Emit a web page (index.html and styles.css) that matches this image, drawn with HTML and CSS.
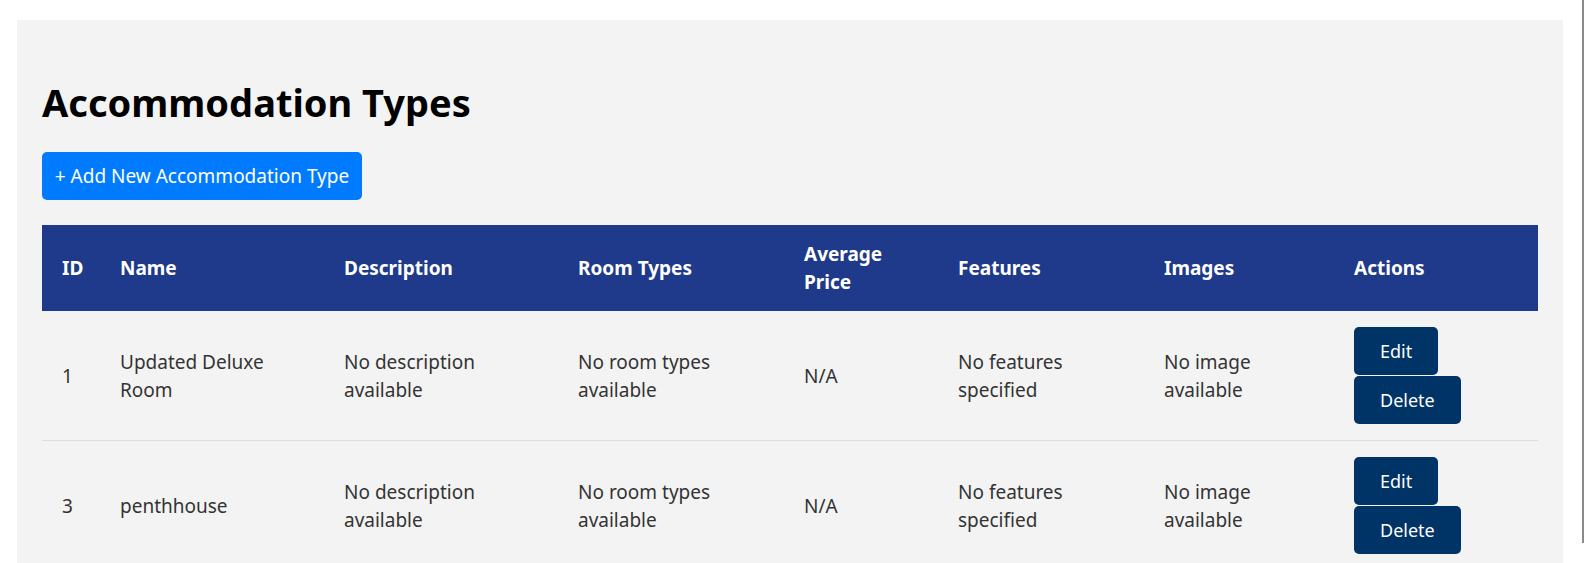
FILE: index.html
```html
<!DOCTYPE html>
<html lang="en">
<head>
<meta charset="utf-8">
<title>Accommodation Types</title>
<link rel="stylesheet" href="styles.css">
</head>
<body>
<div class="page">
  <main class="panel">
    <h1 class="title">Accommodation Types</h1>
    <button class="btn-add">+ Add New Accommodation Type</button>
    <table class="grid">
      <colgroup>
        <col class="c-id"><col class="c-name"><col class="c-desc"><col class="c-room"><col class="c-price"><col class="c-feat"><col class="c-img"><col class="c-act">
      </colgroup>
      <thead>
        <tr>
          <th>ID</th><th>Name</th><th>Description</th><th>Room Types</th><th>Average Price</th><th>Features</th><th>Images</th><th>Actions</th>
        </tr>
      </thead>
      <tbody>
        <tr>
          <td>1</td>
          <td>Updated Deluxe Room</td>
          <td>No description available</td>
          <td>No room types available</td>
          <td>N/A</td>
          <td>No features specified</td>
          <td>No image available</td>
          <td class="actions"><button class="btn-act">Edit</button><button class="btn-act">Delete</button></td>
        </tr>
        <tr>
          <td>3</td>
          <td>penthhouse</td>
          <td>No description available</td>
          <td>No room types available</td>
          <td>N/A</td>
          <td>No features specified</td>
          <td>No image available</td>
          <td class="actions"><button class="btn-act">Edit</button><button class="btn-act">Delete</button></td>
        </tr>
      </tbody>
    </table>
  </main>
  <div class="edge"></div>
</div>
</body>
</html>
```
FILE: styles.css
```css
html, body {
  margin: 0;
  padding: 0;
  background: #ffffff;
  height: 100%;
  overflow: hidden;
}
.page {
  display: flex;
  align-items: flex-start;
  height: 100%;
  padding: 20px 3px 0 17px;
  box-sizing: border-box;
}
.panel {
  width: 1546px;
  flex: none;
  background: #f3f3f3;
  padding: 57px 25px 40px 25px;
  box-sizing: border-box;
  min-height: 800px;
}
.edge {
  width: 2px;
  height: 100%;
  margin-top: -20px;
  margin-left: 19px;
  background: #8a8a8a;
  flex: none;
}
.title {
  font-family: "Noto Sans", sans-serif;
  font-weight: 700;
  font-size: 38px;
  line-height: 50px;
  color: #000;
  margin: 0 0 25px 0;
}
.btn-add {
  display: block;
  height: 48px;
  width: 320px;
  padding: 0;
  background: #007bff;
  color: #fff;
  border: none;
  border-radius: 5px;
  font-family: "Noto Sans", sans-serif;
  font-size: 19px;
  margin-bottom: 25px;
}
.grid {
  width: 1496px;
  border-collapse: collapse;
  table-layout: fixed;
  font-family: "Noto Sans", sans-serif;
  font-size: 19px;
  line-height: 28px;
  color: #333;
}
.c-id { width: 58px; }
.c-name { width: 224px; }
.c-desc { width: 234px; }
.c-room { width: 226px; }
.c-price { width: 154px; }
.c-feat { width: 206px; }
.c-img { width: 190px; }
.c-act { width: 204px; }
.grid th {
  background: #1f3a8a;
  color: #fff;
  font-weight: 700;
  text-align: left;
  padding: 15px 20px;
  vertical-align: middle;
}
.grid td {
  padding: 16px 20px 15px 20px;
  vertical-align: middle;
  border-bottom: 1px solid #dddddd;
}
.actions {
  line-height: 0;
}
.btn-act {
  display: block;
  height: 48px;
  padding: 0 26px;
  background: #003366;
  color: #fff;
  border: none;
  border-radius: 5px;
  font-family: "Noto Sans", sans-serif;
  font-size: 18px;
  line-height: 48px;
  margin-bottom: 1px;
}
```
